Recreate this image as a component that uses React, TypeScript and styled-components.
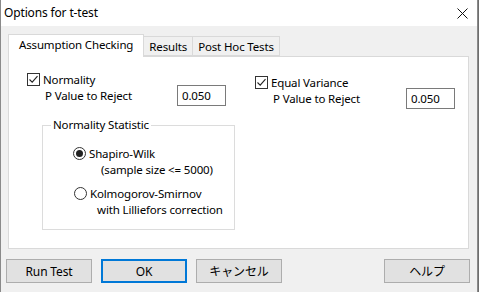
import React from "react";
import styled, { createGlobalStyle } from "styled-components";

const Global = createGlobalStyle`
  html, body { margin: 0; padding: 0; background: #6e6e6e; }
  * { box-sizing: border-box; }
  body { font-family: "Noto Sans", "Segoe UI", sans-serif; font-size: 11.5px; letter-spacing: -0.15px; color: #000; }
`;

const Window = styled.div`
  height: 292px;
  width: 478px;
  display: flex;
  flex-direction: column;
  background: #f0f0f0;
  border-left: 1px solid #8a8a8a;
  border-right: 1px solid #8a8a8a;
`;

const TitleBar = styled.div`
  height: 26px;
  background: #fff;
  display: flex;
  align-items: center;
  justify-content: space-between;
  padding: 0 9px 1px 3px;
  font-size: 12px;
`;

const Close = styled.svg`
  width: 11px;
  height: 11px;
  margin-top: 1px;
`;

const Body = styled.div`
  flex: 1;
  display: flex;
  flex-direction: column;
  padding: 8px 8px 0 7px;
`;

const TabStrip = styled.div`
  display: flex;
  align-items: flex-end;
  height: 22px;
  position: relative;
  z-index: 1;
`;

const Tab = styled.div<{ $active?: boolean }>`
  height: ${(p) => (p.$active ? "23px" : "20px")};
  margin-bottom: ${(p) => (p.$active ? "-1px" : "0")};
  padding: ${(p) => (p.$active ? "0 10px 3px 10px" : "0 5px 0 5px")};
  background: ${(p) => (p.$active ? "#fff" : "#f0f0f0")};
  border: 1px solid #d9d9d9;
  border-bottom: ${(p) => (p.$active ? "none" : "1px solid #d9d9d9")};
  margin-left: ${(p) => (p.$active ? "0" : "-1px")};
  display: flex;
  align-items: center;
  white-space: nowrap;
`;

const Panel = styled.div`
  height: 193px;
  width: 461px;
  background: #fff;
  border: 1px solid #d9d9d9;
  display: grid;
  grid-template-columns: 228px 1fr;
  padding: 15px 0 0 18px;
`;

const Column = styled.div<{ $indent?: number }>`
  display: flex;
  flex-direction: column;
  padding-top: ${(p) => p.$indent ?? 0}px;
`;

const CheckRow = styled.label`
  display: flex;
  align-items: center;
  gap: 3px;
  height: 15px;
`;

const Box = styled.span`
  width: 13px;
  height: 13px;
  border: 1px solid #333;
  background: #fff;
  display: inline-flex;
  align-items: center;
  justify-content: center;
`;

const ValueRow = styled.div<{ $inputGap: number }>`
  display: grid;
  grid-template-columns: ${(p) => p.$inputGap}px 49px;
  align-items: center;
  padding-left: 18px;
  margin-top: -2px;
`;

const Input = styled.div`
  height: 21px;
  border: 1px solid #7a7a7a;
  background: #fff;
  padding: 0 0 0 4px;
  display: flex;
  align-items: center;
`;

const Group = styled.fieldset`
  margin: 12px 0 0 15px;
  width: 193px;
  height: 112px;
  border: 1px solid #dcdcdc;
  padding: 0;
  display: flex;
  flex-direction: column;
`;

const Legend = styled.legend`
  margin-left: 8px;
  padding: 0 2px;
  line-height: 14px;
`;

const RadioItem = styled.div<{ $left: number; $top: number; $sub: number }>`
  display: grid;
  grid-template-columns: 13px auto;
  column-gap: 3px;
  row-gap: 1px;
  margin: ${(p) => p.$top}px 0 0 ${(p) => p.$left}px;
  align-items: center;
  line-height: 15px;
  & > .sub {
    grid-column: 1 / span 2;
    padding-left: ${(p) => p.$sub}px;
  }
`;

const Radio = styled.span<{ $on?: boolean }>`
  width: 13px;
  height: 13px;
  border: 1px solid #333;
  border-radius: 50%;
  background: #fff;
  display: inline-flex;
  align-items: center;
  justify-content: center;
  &::after {
    content: "";
    width: 7px;
    height: 7px;
    border-radius: 50%;
    background: #222;
    display: ${(p) => (p.$on ? "block" : "none")};
  }
`;

const ButtonRow = styled.div`
  display: flex;
  gap: 9px;
  margin: 10px 0 0 -2px;
  margin-right: -1px;
`;

const Button = styled.div<{ $default?: boolean; $push?: boolean }>`
  width: 86px;
  height: 24px;
  background: #e1e1e1;
  border: ${(p) => (p.$default ? "2px solid #0078d7" : "1px solid #adadad")};
  margin-left: ${(p) => (p.$push ? "auto" : "0")};
  display: flex;
  align-items: center;
  justify-content: center;
  font-family: "Noto Sans", "Noto Sans CJK JP", sans-serif;
  font-size: 12px;
`;

const Check = () => (
  <svg width="11" height="11" viewBox="0 0 11 11">
    <path d="M1.5 5.5 L4.2 8.2 L9.5 2.2" fill="none" stroke="#222" strokeWidth="1.1" />
  </svg>
);

export default function App() {
  return (
    <>
      <Global />
      <Window>
        <TitleBar>
          <span>Options for t-test</span>
          <Close viewBox="0 0 11 11">
            <path d="M0.5 0.5 L10.5 10.5 M10.5 0.5 L0.5 10.5" stroke="#111" strokeWidth="1" />
          </Close>
        </TitleBar>
        <Body>
          <TabStrip>
            <Tab $active>Assumption Checking</Tab>
            <Tab>Results</Tab>
            <Tab>Post Hoc Tests</Tab>
          </TabStrip>
          <Panel>
            <Column>
              <CheckRow>
                <Box><Check /></Box>
                Normality
              </CheckRow>
              <ValueRow $inputGap={132}>
                <span>P Value to Reject</span>
                <Input>0.050</Input>
              </ValueRow>
              <Group>
                <Legend>Normality Statistic</Legend>
                <RadioItem $left={30} $top={14} $sub={28}>
                  <Radio $on />
                  <span>Shapiro-Wilk</span>
                  <span className="sub">(sample size &lt;= 5000)</span>
                </RadioItem>
                <RadioItem $left={31} $top={9} $sub={23}>
                  <Radio />
                  <span>Kolmogorov-Smirnov</span>
                  <span className="sub">with Lilliefors correction</span>
                </RadioItem>
              </Group>
            </Column>
            <Column $indent={3}>
              <CheckRow>
                <Box><Check /></Box>
                Equal Variance
              </CheckRow>
              <ValueRow $inputGap={133}>
                <span>P Value to Reject</span>
                <Input>0.050</Input>
              </ValueRow>
            </Column>
          </Panel>
          <ButtonRow>
            <Button>Run Test</Button>
            <Button $default>OK</Button>
            <Button>キャンセル</Button>
            <Button $push>ヘルプ</Button>
          </ButtonRow>
        </Body>
      </Window>
    </>
  );
}
